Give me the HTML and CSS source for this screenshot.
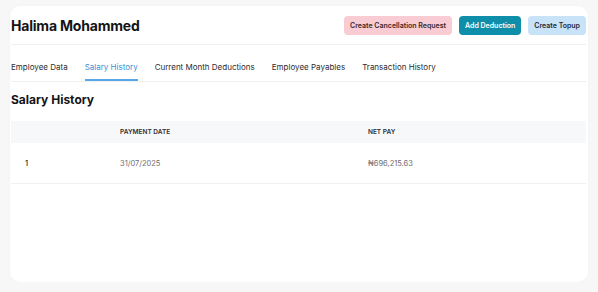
FILE: index.html
```html
<!DOCTYPE html>
<html lang="en">
<head>
  <meta charset="UTF-8" />
  <meta name="viewport" content="width=device-width, initial-scale=1.0" />
  <title>Halima Mohammed - Salary History</title>
  <link rel="stylesheet" href="styles.css">
</head>
<body>
  <div class="card">
    <div class="page-header">
      <h1 class="employee-name">Halima Mohammed</h1>
      <div class="actions">
        <button class="btn btn-cancel">Create Cancellation Request</button>
        <button class="btn btn-deduction">Add Deduction</button>
        <button class="btn btn-topup">Create Topup</button>
      </div>
    </div>

    <nav class="tabs">
      <a href="#" class="tab">Employee Data</a>
      <a href="#" class="tab active">Salary History</a>
      <a href="#" class="tab">Current Month Deductions</a>
      <a href="#" class="tab">Employee Payables</a>
      <a href="#" class="tab">Transaction History</a>
    </nav>

    <h2 class="section-title">Salary History</h2>

    <div class="history-table">
      <div class="row head">
        <div class="cell"></div>
        <div class="cell">Payment Date</div>
        <div class="cell">Net Pay</div>
      </div>
      <div class="row">
        <div class="cell num">1</div>
        <div class="cell muted">31/07/2025</div>
        <div class="cell muted">₦696,215.63</div>
      </div>
    </div>
  </div>
</body>
</html>
```

FILE: styles.css
```css
body {
  margin: 0;
  background-color: #f7f7f7;
  font-family: Inter, 'Noto Sans', sans-serif;
  color: #1c1c1e;
}
.card {
  margin: 6px 10px 0 10px;
  height: 276px;
  background-color: #fff;
  border-radius: 10px;
  padding: 0 2px 0 1px;
  box-sizing: border-box;
  box-shadow: 0 0 3px rgba(0, 0, 0, 0.03);
}
.page-header {
  display: flex;
  align-items: center;
  justify-content: space-between;
  height: 39px;
  border-bottom: 1px solid #eeeff1;
  padding-top: 1px;
  box-sizing: border-box;
}
.employee-name {
  margin: 0;
  font-size: 14px;
  font-weight: 700;
  letter-spacing: -0.2px;
  color: #141416;
}
.actions {
  display: flex;
  gap: 7px;
}
.btn {
  height: 19px;
  padding: 0 6px;
  border: none;
  border-radius: 4px;
  font-family: Inter, 'Noto Sans', sans-serif;
  font-size: 7px;
  font-weight: 600;
}
.btn-cancel {
  background-color: #f9cbd2;
  color: #3a2a2c;
}
.btn-deduction {
  background-color: #0e8ea8;
  color: #fff;
}
.btn-topup {
  background-color: #c8e2f8;
  color: #1e2a36;
}
.tabs {
  display: flex;
  gap: 17px;
  border-bottom: 1px solid #eeeff1;
}
.tab {
  padding: 16px 0 6px;
  line-height: 12px;
  font-size: 8px;
  color: #2c2c30;
  text-decoration: none;
  border-bottom: 2px solid transparent;
}
.tab.active {
  color: #3b8fd9;
  border-bottom-color: #5aa6e6;
}
.section-title {
  margin: 10px 0 0;
  font-size: 12px;
  line-height: 16px;
  font-weight: 700;
  color: #141416;
}
.history-table {
  margin-top: 13px;
}
.row {
  display: grid;
  grid-template-columns: 95px 248px 1fr;
  align-items: center;
  height: 40px;
  border-bottom: 1px solid #f0f1f3;
}
.row.head {
  height: 22px;
  background-color: #f7f8fa;
  border-bottom: none;
}
.cell {
  padding-left: 14px;
  font-size: 7.5px;
}
.row.head .cell {
  font-size: 6.5px;
  font-weight: 600;
  text-transform: uppercase;
  color: #2e2e33;
}
.num {
  font-weight: 500;
  color: #1c1c1e;
}
.muted {
  color: #6e6e74;
}
```
